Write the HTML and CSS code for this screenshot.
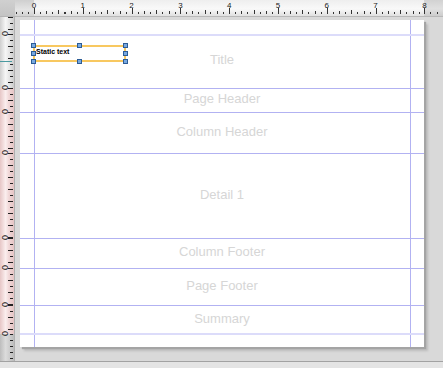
FILE: index.html
```html
<!DOCTYPE html>
<html lang="en">
<head>
  <meta charset="UTF-8">
  <title>Report Designer</title>
  <link rel="stylesheet" href="styles.css">
</head>
<body>
  <div class="designer">
    <div class="corner"></div>

    <div class="hruler">
      <div class="hr-lead"></div>
      <div class="inch"><span>0</span></div>
      <div class="inch"><span>1</span></div>
      <div class="inch"><span>2</span></div>
      <div class="inch"><span>3</span></div>
      <div class="inch"><span>4</span></div>
      <div class="inch"><span>5</span></div>
      <div class="inch"><span>6</span></div>
      <div class="inch marked"><span>7</span></div>
      <div class="inch out"><span>8</span></div>
    </div>

    <div class="vruler">
      <div class="vsec lead"></div>
      <div class="vsec s-title"><span>0</span><i class="guide"></i></div>
      <div class="vsec pink s-pheader"><span>0</span></div>
      <div class="vsec pink s-cheader"><span>0</span></div>
      <div class="vsec pink s-detail"><span>0</span></div>
      <div class="vsec pink s-cfooter"><span>0</span></div>
      <div class="vsec pink s-pfooter"><span>0</span></div>
      <div class="vsec pink s-summary"><span>0</span></div>
      <div class="vsec s-rest"><span>0</span></div>
    </div>

    <div class="canvas">
      <div class="page">
        <div class="margin-line"></div>
        <div class="band b-title">
          <div class="static-text">
            Static text
            <b class="h tl"></b><b class="h tm"></b><b class="h tr"></b>
            <b class="h ml"></b><b class="h mr"></b>
            <b class="h bl"></b><b class="h bm"></b><b class="h br"></b>
          </div>
          <span class="label">Title</span>
        </div>
        <div class="band b-pheader"><span class="label">Page Header</span></div>
        <div class="band b-cheader"><span class="label">Column Header</span></div>
        <div class="band b-detail"><span class="label">Detail 1</span></div>
        <div class="band b-cfooter"><span class="label">Column Footer</span></div>
        <div class="band b-pfooter"><span class="label">Page Footer</span></div>
        <div class="band b-summary"><span class="label">Summary</span></div>
        <div class="margin-line"></div>
      </div>
    </div>

    <div class="statusbar"></div>
  </div>
</body>
</html>
```

FILE: styles.css
```css
body {
  margin: 0;
  padding: 0;
  font-family: 'Liberation Sans', Arial, sans-serif;
  background: #d8d8d8;
  overflow: hidden;
}

.designer {
  display: grid;
  grid-template-columns: 15px 1fr;
  grid-template-rows: 17px 344px 7px;
  width: 443px;
  height: 368px;
}

.corner {
  background: linear-gradient(180deg, #d0d0d0, #c4c4c4);
  border-bottom: 1px solid #b4b4b4;
}

/* top ruler */
.hruler {
  display: flex;
  height: 16px;
  border-bottom: 1px solid #b8b8b8;
  background: #d6d6d6;
  overflow: hidden;
}

.hr-lead {
  width: 19px;
  flex: none;
  background:
    repeating-linear-gradient(to left, transparent 0 5.1px, #333 5.1px 6.1px) left 0 bottom 2px / 100% 2px no-repeat,
    linear-gradient(180deg, #cfcfcf, #e4e4e4 60%, #d2d2d2);
}

.inch {
  width: 48.8px;
  flex: none;
  font-size: 8px;
  line-height: 8px;
  color: #222;
  padding-top: 2px;
  box-sizing: border-box;
  background:
    linear-gradient(#333, #333) left 0 bottom 2px / 1px 6px no-repeat,
    linear-gradient(#333, #333) left 24.4px bottom 2px / 1px 4px no-repeat,
    repeating-linear-gradient(to right, transparent 0 12.2px, #333 12.2px 13.2px, transparent 13.2px 24.4px) left 0 bottom 2px / 100% 3px no-repeat,
    repeating-linear-gradient(to right, transparent 0 6.1px, #333 6.1px 7.1px, transparent 7.1px 12.2px) left 0 bottom 2px / 100% 2px no-repeat,
    linear-gradient(180deg, #eeeeee, #f9f9f9 55%, #e0e0e0);
}

.inch.marked {
  box-shadow: inset 1px 0 0 transparent;
}

.inch.out {
  width: 19px;
  background:
    linear-gradient(#333, #333) left 0 bottom 2px / 1px 6px no-repeat,
    repeating-linear-gradient(to right, transparent 0 6.1px, #333 6.1px 7.1px) left 0 bottom 2px / 100% 2px no-repeat,
    linear-gradient(180deg, #d2d2d2, #e0e0e0 55%, #cccccc);
}

.inch span {
  display: block;
  width: 10px;
  margin-left: -5px;
  text-align: center;
}

/* left ruler */
.vruler {
  display: flex;
  flex-direction: column;
  border-right: 1px solid #b0b0b0;
  overflow: hidden;
}

.vsec {
  position: relative;
  flex: none;
  box-sizing: border-box;
  background:
    repeating-linear-gradient(to bottom, #222 0 1px, transparent 1px 6px) right 1px top 0 / 3px 100% no-repeat,
    repeating-linear-gradient(to bottom, #222 0 1px, transparent 1px 12px) right 1px top 0 / 5px 100% no-repeat,
    linear-gradient(90deg, #cfcfcf, #f6f6f6 40%, #e6e6e6 65%, #cbcbcb);
}

.vsec.pink {
  background:
    repeating-linear-gradient(to bottom, #222 0 1px, transparent 1px 6px) right 1px top 0 / 3px 100% no-repeat,
    repeating-linear-gradient(to bottom, #222 0 1px, transparent 1px 12px) right 1px top 0 / 5px 100% no-repeat,
    linear-gradient(90deg, #e6c6c6, #fbeeee 40%, #f0d6d6 65%, #e4c4c4);
}

.vsec span {
  display: block;
  width: 9px;
  margin-top: -5px;
  font-size: 9px;
  line-height: 9px;
  text-align: center;
  color: #111;
  transform: rotate(90deg);
}

.vsec .guide {
  position: absolute;
  left: 0;
  top: 27px;
  width: 12px;
  height: 1px;
  background: #4a9aa0;
}

.lead { height: 17px; }
.s-title { height: 54px; }
.s-pheader { height: 24px; }
.s-cheader { height: 41px; }
.s-detail { height: 85px; }
.s-cfooter { height: 30px; }
.s-pfooter { height: 37px; }
.s-summary { height: 29px; }
.s-rest {
  height: 27px;
  background:
    repeating-linear-gradient(to bottom, #222 0 1px, transparent 1px 6px) right 1px top 0 / 3px 100% no-repeat,
    linear-gradient(90deg, #bdbdbd, #dcdcdc 40%, #cfcfcf 65%, #bcbcbc);
}

/* canvas and page */
.canvas {
  background: #d9d9d9;
  padding: 3px 0 0 5px;
  overflow: hidden;
}

.page {
  width: 404px;
  height: 327px;
  padding-top: 14px;
  box-sizing: border-box;
  display: flex;
  flex-direction: column;
  box-shadow: 2px 2px 1px #a4a4a4, 4px 4px 2px #bcbcbc;
  background:
    linear-gradient(#b2b2f2, #b2b2f2) 14px 0 / 1px 100% no-repeat,
    linear-gradient(#b2b2f2, #b2b2f2) 390px 0 / 1px 100% no-repeat,
    #ffffff;
}

.margin-line {
  height: 2px;
  flex: none;
  background: #dcdcfa;
}

.band {
  position: relative;
  flex: none;
  box-sizing: border-box;
  display: flex;
  align-items: center;
  justify-content: center;
  padding-bottom: 4px;
  border-bottom: 1px solid #b2b2f2;
}

.b-title { height: 53px; padding-bottom: 6px; }
.b-pheader { height: 24px; }
.b-cheader { height: 41px; }
.b-detail { height: 85px; }
.b-cfooter { height: 30px; }
.b-pfooter { height: 37px; }
.b-summary { height: 27px; border-bottom: none; padding-bottom: 2px; }

.label {
  font-size: 13px;
  color: #d6d6d6;
}

.static-text {
  position: absolute;
  left: 13px;
  top: 9px;
  width: 93px;
  height: 17px;
  box-sizing: border-box;
  border: 2px solid #f8c860;
  padding: 0 0 0 1px;
  font-size: 7px;
  line-height: 9px;
  font-weight: bold;
  color: #000;
}

.h {
  position: absolute;
  width: 3px;
  height: 3px;
  border: 1px solid #2c5c96;
  background: #78a8e0;
}

.tl { left: -4px; top: -4px; }
.tm { left: 42px; top: -4px; }
.tr { right: -4px; top: -4px; }
.ml { left: -4px; top: 4px; }
.mr { right: -4px; top: 4px; }
.bl { left: -4px; bottom: -4px; }
.bm { left: 42px; bottom: -4px; }
.br { right: -4px; bottom: -4px; }

.statusbar {
  grid-column: 1 / 3;
  border-top: 1px solid #a2a2a2;
  background: #e4e4e4;
}
```
